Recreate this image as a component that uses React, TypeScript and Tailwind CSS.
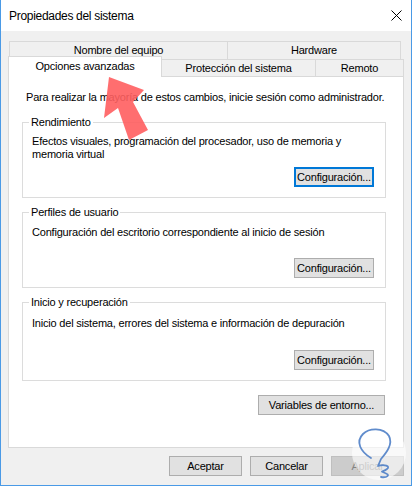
import React from "react";

const ui = "font-['Liberation_Sans',Arial,sans-serif] text-[11px] tracking-[-0.2px] text-black";

function Button({ label, w, focused, disabled }: { label: string; w: string; focused?: boolean; disabled?: boolean }) {
  return (
    <button
      className={`${w} h-[20px] flex items-center justify-center leading-none ${
        focused
          ? "border-2 border-[#0078d7] bg-[#e1e1e1]"
          : disabled
          ? "border border-[#bfbfbf] bg-[#cccccc] text-[#838383]"
          : "border border-[#adadad] bg-[#e1e1e1]"
      }`}
    >
      {label}
    </button>
  );
}

function Group({
  title,
  lines,
  className,
  textGap,
  btnGap,
  pb,
  focused,
}: {
  title: string;
  lines: string[];
  className: string;
  textGap: string;
  btnGap: string;
  pb: string;
  focused?: boolean;
}) {
  return (
    <fieldset className={`ml-[13px] w-[364px] border border-[#dcdcdc] pl-[9px] pr-[11px] ${pb} ${className}`}>
      <legend className="ml-[-3px] px-[2px] leading-[15px]">{title}</legend>
      <div className={`${textGap} leading-[13px]`}>
        {lines.map((l) => (
          <div key={l}>{l}</div>
        ))}
      </div>
      <div className={`flex justify-end ${btnGap}`}>
        <Button label="Configuración..." w="w-[80px]" focused={focused} />
      </div>
    </fieldset>
  );
}

function Arrow() {
  return (
    <svg className="pointer-events-none absolute left-0 top-0" width="412" height="486">
      <defs>
        <filter id="soft" x="-20%" y="-20%" width="140%" height="140%">
          <feGaussianBlur stdDeviation="0.6" />
        </filter>
      </defs>
      <polygon
        points="108,77 143,90 132,102 147,130 128,140 117,108 103,118"
        fill="#ff5f61"
        opacity="0.9"
        filter="url(#soft)"
      />
    </svg>
  );
}

function Watermark() {
  return (
    <svg className="pointer-events-none absolute left-[350px] top-[426px]" width="56" height="56" viewBox="0 0 56 56">
      <circle cx="28" cy="27" r="27" fill="#ffffff" opacity="0.6" />
      <path
        d="M20 32 C10 26 4 16 12 8 C18 2 32 1 38 10 C42 18 36 26 30 33 L27 40 C33 38 40 40 36 43 C32 46 28 45 34 47 C40 49 36 52 30 51"
        fill="none"
        stroke="#4f7fc6"
        strokeWidth="1.8"
        strokeLinecap="round"
        strokeLinejoin="round"
        opacity="0.9"
      />
    </svg>
  );
}

export default function App() {
  return (
    <div className={`relative flex h-[486px] w-[412px] flex-col border-x border-b border-[#4a9ae6] bg-[#f0f0f0] ${ui}`}>
      {/* title bar */}
      <div className="flex h-[31px] items-center justify-between bg-white pl-[8px] pr-[9px]">
        <span className="text-[12px] tracking-[-0.3px]">Propiedades del sistema</span>
        <svg width="11" height="11" viewBox="0 0 11 11">
          <path d="M0.5 0.5 L10.5 10.5 M10.5 0.5 L0.5 10.5" stroke="#000" strokeWidth="1" />
        </svg>
      </div>

      <div className="flex flex-col pl-[7px] pt-[10px]">
        {/* back tab row */}
        <div className="ml-[1px] flex h-[18px] w-[392px]">
          <div className="flex w-[219px] items-center justify-center border-x border-t border-[#d9d9d9]">Nombre del equipo</div>
          <div className="flex flex-1 items-center justify-center border-r border-t border-[#d9d9d9]">Hardware</div>
        </div>
        {/* front tab row */}
        <div className="flex h-[17px] w-[396px] items-end">
          <div className="relative z-10 -mb-px flex h-[21px] w-[154px] shrink-0 items-center justify-center border-x border-t border-[#d9d9d9] bg-white pb-[1px]">
            Opciones avanzadas
          </div>
          <div className="flex h-[17px] w-[154px] items-center justify-center border-r border-t border-[#d9d9d9]">Protección del sistema</div>
          <div className="flex h-[17px] flex-1 items-center justify-center border-r border-t border-[#d9d9d9]">Remoto</div>
        </div>

        {/* panel */}
        <div className="flex h-[372px] w-[396px] flex-col border border-[#d9d9d9] bg-white">
          <div className="pl-[17px] pt-[13px] leading-[15px]">
            Para realizar la mayoría de estos cambios, inicie sesión como administrador.
          </div>
          <Group
            title="Rendimiento"
            lines={["Efectos visuales, programación del procesador, uso de memoria y", "memoria virtual"]}
            className="mt-[10px]"
            textGap="mt-[5px]"
            btnGap="mt-[6px]"
            pb="pb-[10px]"
            focused
          />
          <Group
            title="Perfiles de usuario"
            lines={["Configuración del escritorio correspondiente al inicio de sesión"]}
            className="mt-[7px]"
            textGap="mt-[6px]"
            btnGap="mt-[19px]"
            pb="pb-[9px]"
          />
          <Group
            title="Inicio y recuperación"
            lines={["Inicio del sistema, errores del sistema e información de depuración"]}
            className="mt-[7px]"
            textGap="mt-[7px]"
            btnGap="mt-[20px]"
            pb="pb-[10px]"
          />
          <div className="mt-[14px] flex justify-end pr-[18px]">
            <Button label="Variables de entorno..." w="w-[127px]" />
          </div>
        </div>

        {/* dialog buttons */}
        <div className="mt-[8px] flex w-[396px] justify-end gap-[8px]">
          <Button label="Aceptar" w="w-[73px]" />
          <Button label="Cancelar" w="w-[73px]" />
          <Button label="Aplicar" w="w-[73px]" disabled />
        </div>
      </div>

      <Arrow />
      <Watermark />
    </div>
  );
}
